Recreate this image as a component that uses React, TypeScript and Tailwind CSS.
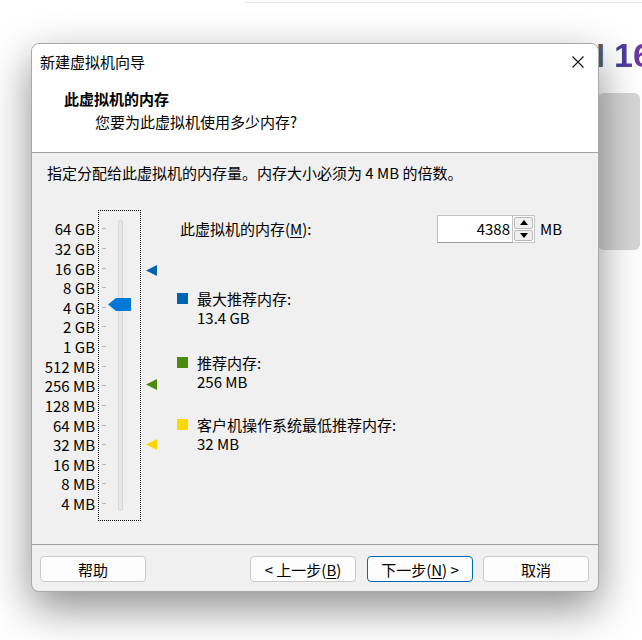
import React from "react";

const sizes = [
  "64 GB",
  "32 GB",
  "16 GB",
  "8 GB",
  "4 GB",
  "2 GB",
  "1 GB",
  "512 MB",
  "256 MB",
  "128 MB",
  "64 MB",
  "32 MB",
  "16 MB",
  "8 MB",
  "4 MB",
];

function Marker({ color, className }: { color: string; className: string }) {
  return (
    <svg
      width="11"
      height="11"
      viewBox="0 0 11 11"
      className={`absolute left-[5px] ${className}`}
    >
      <path d="M0 5.5 L11 0 V11 Z" fill={color} />
    </svg>
  );
}

function Legend({
  color,
  label,
  value,
  className,
}: {
  color: string;
  label: string;
  value: string;
  className: string;
}) {
  return (
    <div className={`flex items-start ${className}`}>
      <div className={`mt-[4px] h-[11px] w-[11px] shrink-0 ${color}`} />
      <div className="ml-[9px] leading-[19px]">
        <div>{label}</div>
        <div>{value}</div>
      </div>
    </div>
  );
}

function Button({
  children,
  primary,
  className = "",
}: {
  children: React.ReactNode;
  primary?: boolean;
  className?: string;
}) {
  return (
    <button
      className={`flex h-[26px] w-[106px] items-center justify-center rounded-[4px] border bg-[#fdfdfd] text-[15px] leading-none text-black ${
        primary ? "border-[#0067c0]" : "border-[#cbcbcb]"
      } ${className}`}
    >
      {children}
    </button>
  );
}

export default function App() {
  return (
    <div className="relative h-[640px] w-[642px] overflow-hidden bg-white font-['Noto_Sans_CJK_SC','Noto_Sans',sans-serif] text-black">
      {/* page behind the dialog */}
      <div className="absolute left-[245px] right-0 top-[2px] h-px bg-[#e3e3e3]" />
      <div className="absolute right-[37px] top-[38px] font-['Liberation_Sans',sans-serif] text-[34px] font-bold leading-[34px] text-[#5c5c5c]">
        WORKSTATION
      </div>
      <div className="absolute left-[614px] top-[38px] bg-gradient-to-r from-[#343f9c] to-[#8a2ea2] bg-clip-text font-['Liberation_Sans',sans-serif] text-[34px] font-bold leading-[34px] text-transparent">
        16
      </div>
      <div className="absolute left-[598px] top-[93px] h-[157px] w-[42px] rounded-[6px] bg-[#d6d6d6]" />

      <div className="relative pl-[31px] pt-[43px]">
        <div className="w-[568px] overflow-hidden rounded-[8px] border border-[#a9a9a9] bg-[#f0f0f0] shadow-[0_16px_44px_rgba(0,0,0,0.45)]">
          {/* title bar */}
          <div className="flex h-[36px] items-center justify-between bg-white pl-[8px] pr-[14px] text-[15px]">
            <span>新建虚拟机向导</span>
            <svg width="12" height="12" viewBox="0 0 12 12">
              <path d="M0.5 0.5 L11.5 11.5 M11.5 0.5 L0.5 11.5" stroke="#111" strokeWidth="1.1" />
            </svg>
          </div>

          {/* header */}
          <div className="h-[72px] bg-white pt-[9px] text-[15px] leading-[20px]">
            <div className="pl-[32px] font-bold">此虚拟机的内存</div>
            <div className="mt-[3px] pl-[63px]">您要为此虚拟机使用多少内存?</div>
          </div>

          {/* body */}
          <div className="h-[392px] border-t border-[#a0a0a0] pt-[10px] text-[15px]">
            <div className="pl-[15px] leading-[20px]">
              指定分配给此虚拟机的内存量。内存大小必须为 4 MB 的倍数。
            </div>

            <div className="mt-[27px] flex">
              {/* scale labels */}
              <div className="w-[66px] pr-[3px] pt-[9px] text-right">
                {sizes.map((s) => (
                  <div key={s} className="flex h-[19.64px] items-center justify-end leading-none">
                    {s}
                  </div>
                ))}
              </div>

              {/* slider */}
              <div className="relative h-[311px] w-[43px] border border-dotted border-black">
                <div className="pt-[8px]">
                  {sizes.map((s) => (
                    <div key={s} className="flex h-[19.64px] items-center pl-[3px]">
                      <div className="h-px w-[4px] bg-[#b5b5b5]" />
                    </div>
                  ))}
                </div>
                <div className="absolute left-[19px] top-[9px] h-[291px] w-[5px] rounded-[2px] border border-[#d6d6d6] bg-[#e7e7e7]" />
                <svg
                  width="23"
                  height="13"
                  viewBox="0 0 23 13"
                  className="absolute left-[9px] top-[87px]"
                >
                  <path d="M0 6.5 L8 0 H23 V13 H8 Z" fill="#0078d7" />
                </svg>
              </div>

              {/* recommendation markers */}
              <div className="relative w-[36px]">
                <Marker color="#0063b1" className="top-[55px]" />
                <Marker color="#4b8a0c" className="top-[169px]" />
                <Marker color="#ffd800" className="top-[229px]" />
              </div>

              {/* values */}
              <div className="flex flex-col">
                <div className="mt-[5px] flex h-[28px] items-center">
                  <span className="w-[260px] pl-[3px]">
                    此虚拟机的内存(<span className="underline underline-offset-2">M</span>):
                  </span>
                  <div className="flex h-[28px] w-[76px] items-center justify-end border border-[#c3c3c3] border-b-[#9a9a9a] bg-white pr-[2px]">
                    4388
                  </div>
                  <div className="flex h-[28px] w-[22px] flex-col gap-px border border-l-0 border-[#c3c3c3] bg-white p-[1px]">
                    <div className="flex flex-1 items-center justify-center rounded-[2px] border border-[#b9b9b9] bg-[#efefef]">
                      <svg width="8" height="5" viewBox="0 0 8 5">
                        <path d="M0 5 L4 0 L8 5 Z" fill="#000" />
                      </svg>
                    </div>
                    <div className="flex flex-1 items-center justify-center rounded-[2px] border border-[#b9b9b9] bg-[#efefef]">
                      <svg width="8" height="5" viewBox="0 0 8 5">
                        <path d="M0 0 L8 0 L4 5 Z" fill="#000" />
                      </svg>
                    </div>
                  </div>
                  <span className="ml-[5px]">MB</span>
                </div>

                <Legend
                  color="bg-[#0063b1]"
                  label="最大推荐内存:"
                  value="13.4 GB"
                  className="mt-[46px]"
                />
                <Legend
                  color="bg-[#4b8a0c]"
                  label="推荐内存:"
                  value="256 MB"
                  className="mt-[26px]"
                />
                <Legend
                  color="bg-[#ffd800]"
                  label="客户机操作系统最低推荐内存:"
                  value="32 MB"
                  className="mt-[24px]"
                />
              </div>
            </div>
          </div>

          {/* footer */}
          <div className="flex h-[47px] items-start border-t border-[#a0a0a0] pl-[8px] pt-[11px]">
            <Button>帮助</Button>
            <Button className="ml-[104px]">
              &lt; 上一步(<span className="underline underline-offset-2">B</span>)
            </Button>
            <Button primary className="ml-[11px]">
              下一步(<span className="underline underline-offset-2">N</span>) &gt;
            </Button>
            <Button className="ml-[10px]">取消</Button>
          </div>
        </div>
      </div>
    </div>
  );
}
